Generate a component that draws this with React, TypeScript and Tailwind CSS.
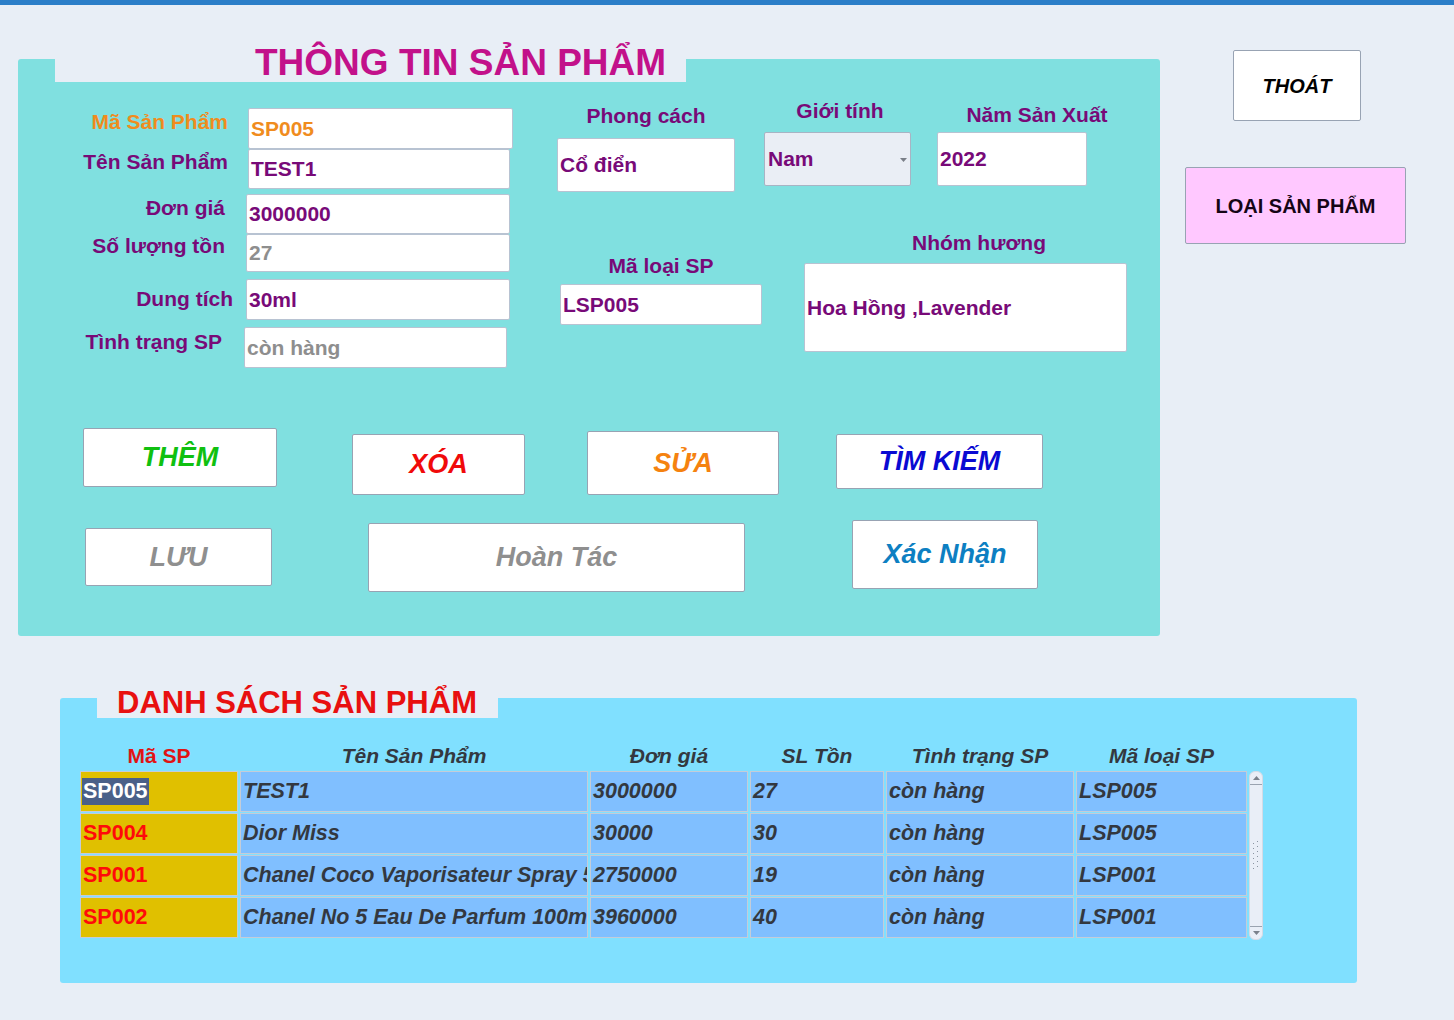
import React from "react";

const PURPLE = "text-[#780a78]";

type Row = {
  label: string;
  lcls: string;
  icls: string;
  spacer: string;
  val: string;
  vcls: string;
};

const leftRows: Row[] = [
  { label: "Mã Sản Phẩm", lcls: "w-[210px] mt-[2px] text-[#f08c1e]", icls: "ml-[20px] w-[265px] h-[41px] mt-[49px]", spacer: "h-[49px]", val: "SP005", vcls: "text-[#f08c1e]" },
  { label: "Tên Sản Phẩm", lcls: "w-[210px] mt-[1px] text-[#780a78]", icls: "ml-[20px] w-[262px] h-[40px]", spacer: "h-0", val: "TEST1", vcls: "text-[#780a78]" },
  { label: "Đơn giá", lcls: "w-[207px] mt-[2px] text-[#780a78]", icls: "ml-[21px] w-[264px] h-[40px] mt-[5px]", spacer: "h-[5px]", val: "3000000", vcls: "text-[#780a78]" },
  { label: "Số lượng tồn", lcls: "w-[207px] mt-[0px] text-[#780a78]", icls: "ml-[21px] w-[264px] h-[38px]", spacer: "h-0", val: "27", vcls: "text-[#8e8e8e]" },
  { label: "Dung tích", lcls: "w-[215px] mt-[8px] text-[#780a78]", icls: "ml-[13px] w-[264px] h-[41px] mt-[7px]", spacer: "h-[7px]", val: "30ml", vcls: "text-[#780a78]" },
  { label: "Tình trạng SP", lcls: "w-[204px] mt-[3px] text-[#780a78]", icls: "ml-[22px] w-[263px] h-[41px] mt-[7px]", spacer: "h-[7px]", val: "còn hàng", vcls: "text-[#8e8e8e]" },
];

const tableRows = [
  ["SP005", "TEST1", "3000000", "27", "còn hàng", "LSP005"],
  ["SP004", "Dior Miss", "30000", "30", "còn hàng", "LSP005"],
  ["SP001", "Chanel Coco Vaporisateur Spray 50ml", "2750000", "19", "còn hàng", "LSP001"],
  ["SP002", "Chanel No 5 Eau De Parfum 100ml", "3960000", "40", "còn hàng", "LSP001"],
];

const headers = ["Tên Sản Phẩm", "Đơn giá", "SL Tồn", "Tình trạng SP", "Mã loại SP"];

function Input({ cls, children, textCls }: { cls: string; children: React.ReactNode; textCls: string }) {
  return (
    <div className={`${cls} shrink-0 flex items-center bg-white border border-[#b8c3d2] rounded-[2px] pl-[2px] text-[21px] font-bold whitespace-nowrap overflow-hidden ${textCls}`}>
      {children}
    </div>
  );
}

function Btn({ cls, text, color }: { cls: string; text: string; color: string }) {
  return (
    <div className={`${cls} shrink-0 flex items-center justify-center bg-white border border-[#98a3b3] rounded-[2px] italic font-bold text-[27px] ${color}`}>
      {text}
    </div>
  );
}

export default function App() {
  return (
    <div className="w-[1454px] h-[1020px] bg-[#e8eef6] font-['Liberation_Sans',Arial,sans-serif] overflow-hidden">
      <div className="h-[5px] bg-[#2b7ec8]" />
      <div className="flex items-start">
        {/* Top panel */}
        <div className="relative ml-[18px] mt-[54px] w-[1142px] h-[577px] bg-[#80e0e0] rounded-[3px]">
          <div className="absolute left-[37px] top-[-22px] w-[631px] h-[45px] bg-[#e8eef6] flex items-end pl-[200px]">
            <span className="text-[37px] leading-none font-bold text-[#c2118a] pb-[1px]">THÔNG TIN SẢN PHẨM</span>
          </div>

          <div className="flex h-[369px]">
            {/* left fields */}
            <div className="w-[495px] shrink-0 flex flex-col">
              {leftRows.map((r) => (
                <div key={r.label} className="flex items-start">
                  <div className="shrink-0 flex flex-col">
                    <div className={r.spacer} />
                    <div className={`${r.lcls} text-right text-[21px] leading-[24px] font-bold whitespace-nowrap`}>{r.label}</div>
                  </div>
                  <Input cls={r.icls} textCls={r.vcls}>{r.val}</Input>
                </div>
              ))}
            </div>

            {/* right fields */}
            <div className="flex flex-col">
              <div className="flex items-start h-[133px]">
                <div className="ml-[44px] mt-[45px] w-[178px] flex flex-col items-center">
                  <div className={`text-[21px] leading-[24px] font-bold ${PURPLE} whitespace-nowrap`}>Phong cách</div>
                  <Input cls="mt-[10px] w-[178px] h-[54px]" textCls={PURPLE}>Cổ điển</Input>
                </div>
                <div className="ml-[29px] mt-[40px] w-[147px] flex flex-col items-center">
                  <div className={`text-[21px] leading-[24px] font-bold ${PURPLE} whitespace-nowrap ml-[5px]`}>Giới tính</div>
                  <div className={`relative mt-[9px] w-[147px] h-[54px] flex items-center bg-[#eaeef5] border border-[#a8b4c4] rounded-[2px] pl-[3px] text-[21px] font-bold ${PURPLE}`}>
                    Nam
                    <svg className="absolute right-[3px] top-[25px]" width="7" height="4" viewBox="0 0 7 4">
                      <path d="M0 0 L7 0 L3.5 4 Z" fill="#7a7f88" />
                    </svg>
                  </div>
                </div>
                <div className="ml-[26px] mt-[44px] w-[150px] flex flex-col items-center">
                  <div className={`text-[21px] leading-[24px] font-bold ${PURPLE} whitespace-nowrap ml-[50px]`}>Năm Sản Xuất</div>
                  <Input cls="mt-[5px] w-[150px] h-[54px]" textCls={PURPLE}>2022</Input>
                </div>
              </div>
              <div className="flex items-start">
                <div className="ml-[47px] mt-[62px] w-[202px] flex flex-col items-center">
                  <div className={`text-[21px] leading-[24px] font-bold ${PURPLE} whitespace-nowrap`}>Mã loại SP</div>
                  <Input cls="mt-[6px] w-[202px] h-[41px]" textCls={PURPLE}>LSP005</Input>
                </div>
                <div className="ml-[42px] mt-[39px] w-[323px] flex flex-col items-center">
                  <div className={`text-[21px] leading-[24px] font-bold ${PURPLE} whitespace-nowrap ml-[27px]`}>Nhóm hương</div>
                  <Input cls="mt-[8px] w-[323px] h-[89px]" textCls={PURPLE}>Hoa Hồng ,Lavender</Input>
                </div>
              </div>
            </div>
          </div>

          {/* buttons */}
          <div className="flex items-start h-[67px]">
            <Btn cls="ml-[65px] w-[194px] h-[59px]" text="THÊM" color="text-[#10c010]" />
            <Btn cls="ml-[75px] mt-[6px] w-[173px] h-[61px]" text="XÓA" color="text-[#f00a0a]" />
            <Btn cls="ml-[62px] mt-[3px] w-[192px] h-[64px]" text="SỬA" color="text-[#f5820f]" />
            <Btn cls="ml-[57px] mt-[6px] w-[207px] h-[55px]" text="TÌM KIẾM" color="text-[#0a0ad2]" />
          </div>
          <div className="flex items-start mt-[25px]">
            <Btn cls="ml-[67px] mt-[8px] w-[187px] h-[58px]" text="LƯU" color="text-[#8f8f8f]" />
            <Btn cls="ml-[96px] mt-[3px] w-[377px] h-[69px]" text="Hoàn Tác" color="text-[#8f8f8f]" />
            <Btn cls="ml-[107px] w-[186px] h-[69px]" text="Xác Nhận" color="text-[#0d7fc2]" />
          </div>
        </div>

        {/* right column */}
        <div className="flex flex-col">
          <div className="ml-[73px] mt-[45px] w-[128px] h-[71px] flex items-center justify-center bg-white border border-[#98a3b3] rounded-[2px] italic font-bold text-[20px] text-black">
            THOÁT
          </div>
          <div className="ml-[25px] mt-[46px] w-[221px] h-[77px] flex items-center justify-center bg-[#ffc8ff] border border-[#98a3b3] rounded-[2px] font-bold text-[20px] text-[#150515]">
            LOẠI SẢN PHẨM
          </div>
        </div>
      </div>

      {/* Bottom panel */}
      <div className="relative ml-[60px] mt-[62px] w-[1297px] h-[285px] bg-[#80e0ff] rounded-[3px] pl-[20px] pt-[47px]">
        <div className="absolute left-[37px] top-[-20px] w-[401px] h-[40px] bg-[#e8eef6] flex items-end pl-[20px]">
          <span className="text-[31px] leading-none font-bold text-[#e81010]">DANH SÁCH SẢN PHẨM</span>
        </div>

        <div className="grid grid-cols-[158px_348px_158px_134px_188px_171px] gap-x-[2px] h-[26px] items-start text-[21px] leading-[22px] font-bold">
          <div className="text-center text-[#e01414]">Mã SP</div>
          {headers.map((h) => (
            <div key={h} className="text-center italic text-[#333840] whitespace-nowrap">{h}</div>
          ))}
        </div>

        <div className="flex items-start">
          <div className="grid grid-cols-[158px_348px_158px_134px_188px_171px] gap-x-[2px] gap-y-[1px] text-[21.5px] font-bold">
            {tableRows.map((r, ri) => (
              <React.Fragment key={r[0]}>
                <div className="h-[41px] flex items-center bg-[#e0c000] border border-[#c4ccd8] pl-[1px] overflow-hidden whitespace-nowrap">
                  {ri === 0 ? (
                    <span className="bg-[#4a6088] text-white px-[1px] leading-[27px]">{r[0]}</span>
                  ) : (
                    <span className="text-[#ff0a0a] pl-[1px]">{r[0]}</span>
                  )}
                </div>
                {r.slice(1).map((c, ci) => (
                  <div key={ci} className="h-[41px] flex items-center bg-[#80bfff] border border-[#c4ccd8] pl-[2px] italic text-[#333840] overflow-hidden whitespace-nowrap">
                    {c}
                  </div>
                ))}
              </React.Fragment>
            ))}
          </div>
          {/* scrollbar */}
          <div className="ml-[2px] w-[14px] h-[169px] bg-[#e9eef7] border border-[#d4dbe6] rounded-[6px] flex flex-col items-center">
            <div className="h-[13px] w-full flex items-center justify-center border-b border-[#9aa3b0]">
              <svg width="7" height="4" viewBox="0 0 7 4"><path d="M0 4 L7 4 L3.5 0 Z" fill="#7a818c" /></svg>
            </div>
            <div className="flex-1 w-full flex items-center justify-center">
              <svg width="8" height="36" viewBox="0 0 8 36">
                {[0, 1, 2, 3, 4, 5].map((i) => (
                  <g key={i}>
                    <path d={`M1 ${6 + i * 5} L2 ${5 + i * 5}`} stroke="#8a93a0" strokeWidth="1" />
                    <path d={`M5 ${4 + i * 5} L6 ${3 + i * 5}`} stroke="#8a93a0" strokeWidth="1" />
                  </g>
                ))}
              </svg>
            </div>
            <div className="h-[13px] w-full flex items-center justify-center border-t border-[#9aa3b0]">
              <svg width="7" height="4" viewBox="0 0 7 4"><path d="M0 0 L7 0 L3.5 4 Z" fill="#7a818c" /></svg>
            </div>
          </div>
        </div>
      </div>
    </div>
  );
}
